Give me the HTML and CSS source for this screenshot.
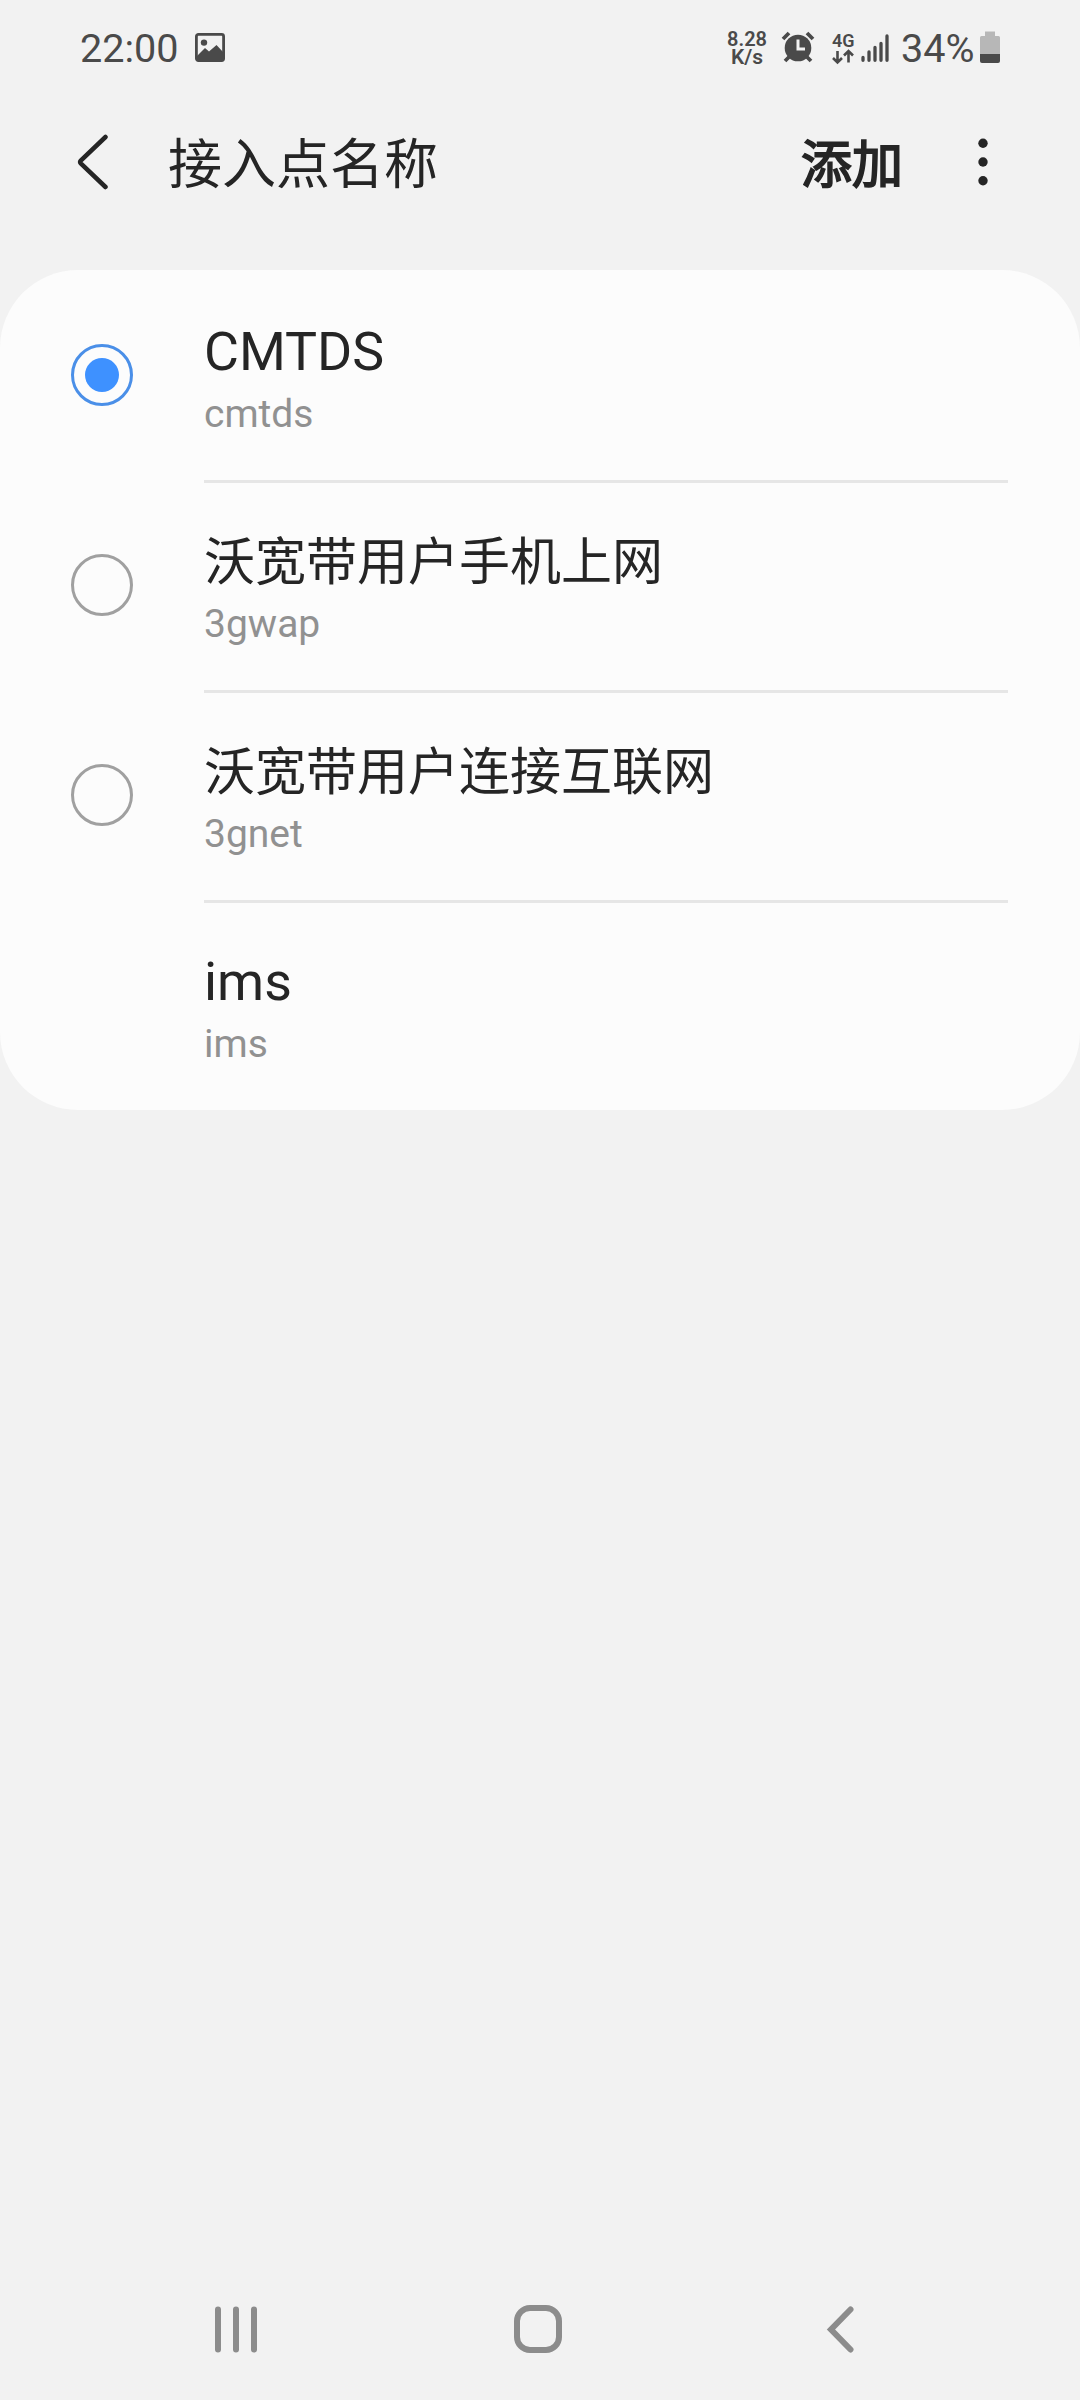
FILE: index.html
```html
<!DOCTYPE html>
<html lang="zh-CN">
<head>
<meta charset="utf-8">
<title>接入点名称</title>
<link rel="stylesheet" href="styles.css">
</head>
<body>
<div class="status">
  <div class="status-left">
    <span class="clock">22:00</span>
    <svg class="pic" width="30" height="29" viewBox="0 0 30 29"><rect x="1.4" y="1.4" width="27.2" height="26.2" rx="2" fill="none" stroke="#4a4a4a" stroke-width="2.8"/><circle cx="9" cy="9.6" r="3.2" fill="#4a4a4a"/><path fill="#4a4a4a" d="M2 23L10 15L14 18.500L21.500 12L28 19V27H2Z"/></svg>
  </div>
  <div class="status-right">
    <div class="speed"><span>8.28</span><span class="unit">K/s</span></div>
    <svg class="alarm" width="34" height="32" viewBox="0 0 34 32"><circle cx="17" cy="17" r="13.300" fill="#4a4a4a"/><path d="M2 8L8 2M32 8L26 2M8.500 25.500L4 30M25.500 25.500L30 30" stroke="#4a4a4a" stroke-width="3.800"/><path d="M17 8.500V18H24" stroke="#f2f2f2" stroke-width="3" fill="none"/></svg>
    <div class="net"><span>4G</span><svg width="22" height="16" viewBox="0 0 22 16"><path d="M5.500 2V13.500M1 9L5.500 13.500L10 9M16.500 13.500V2M12 6.500L16.500 2L21 6.500" stroke="#4a4a4a" stroke-width="2.600" fill="none"/></svg></div>
    <svg class="signal" width="28" height="28" viewBox="0 0 28 28"><path stroke="#4a4a4a" stroke-width="3.300" stroke-linecap="round" d="M2 23.500V26.300M8 18V26.300M14 13.500V26.300M20 9.500V26.300M26 2V26.300"/></svg>
    <span class="percent">34%</span>
    <svg class="battery" width="20" height="32" viewBox="0 0 20 32"><path fill="#b7b7b7" d="M5 0.500H15V5H18.500Q20 5 20 6.500V23H0V6.500Q0 5 1.500 5H5Z"/><path fill="#4a4a4a" d="M0 23H20V30Q20 32 18 32H2Q0 32 0 30Z"/></svg>
  </div>
</div>
<header class="bar">
  <svg class="back" width="32" height="58" viewBox="0 0 32 58"><path d="M28.500 4L3.800 27.500Q2.500 29 3.800 30.500L28.500 54" fill="none" stroke="#252525" stroke-width="4.500" stroke-linecap="round"/></svg>
  <h1 class="title">接入点名称</h1>
  <span class="add">添加</span>
  <svg class="more" width="10" height="48" viewBox="0 0 10 48"><g fill="#252525"><circle cx="5" cy="5.300" r="4.700"/><circle cx="5" cy="24" r="4.700"/><circle cx="5" cy="42.700" r="4.700"/></g></svg>
</header>
<main class="card">
  <div class="row"><i class="radio on"></i><div class="text"><div class="name latin">CMTDS</div><div class="apn">cmtds</div></div></div>
  <div class="row"><i class="radio"></i><div class="text ruled"><div class="name">沃宽带用户手机上网</div><div class="apn">3gwap</div></div></div>
  <div class="row"><i class="radio"></i><div class="text ruled"><div class="name">沃宽带用户连接互联网</div><div class="apn">3gnet</div></div></div>
  <div class="row"><i class="radio none"></i><div class="text ruled"><div class="name latin">ims</div><div class="apn">ims</div></div></div>
</main>
<nav class="nav">
  <svg class="recents" width="44" height="48" viewBox="0 0 44 48"><path d="M4 4.500V44.500M22 4.500V44.500M40 4.500V44.500"/></svg>
  <svg class="home" width="48" height="48" viewBox="0 0 48 48"><rect x="3" y="3" width="42" height="42" rx="13"/></svg>
  <svg class="return" width="28" height="48" viewBox="0 0 28 48"><path d="M24.500 4.500L5 24.500L24.500 44.500"/></svg>
</nav>
</body>
</html>
```
FILE: styles.css
```css
* { box-sizing: border-box; }
body { margin: 0; height: 2400px; background: #f2f2f2; color: #252525; font-family: Roboto, "Noto Sans CJK SC", sans-serif; display: flex; flex-direction: column; }
.status { height: 96px; padding: 0 80px; display: flex; justify-content: space-between; align-items: center; color: #4a4a4a; }
.status-left, .status-right { display: flex; align-items: center; }
.clock, .percent { font-size: 39.6px; line-height: 46px; padding-top: 2px; }
.pic { margin: 0 0 2px 16px; }
.speed { width: 40px; display: flex; flex-direction: column; align-items: center; font-size: 20px; line-height: 18px; font-weight: 600; }
.unit { font-size: 21px; }
.alarm { margin: 0 0 2px 14px; }
.net { width: 22px; margin-left: 17px; display: flex; flex-direction: column; font-size: 18px; line-height: 17px; font-weight: 600; }
.signal { margin-left: 7px; }
.percent { width: 74px; margin-left: 12px; }
.battery { margin: 0 0 2px 5px; }
.bar { height: 174px; padding: 0 92px 42px 77px; display: flex; align-items: center; }
.title { margin: -3px 0 0 59px; font-size: 54px; font-weight: 400; }
.add { margin: -3px 0 0 auto; font-size: 51px; -webkit-text-stroke: 1.8px #252525; }
.more { margin-left: 75px; }
.card { height: 840px; background: #fcfcfc; border-radius: 78px; }
.row { height: 210px; padding: 0 72px 0 71px; display: flex; align-items: center; }
.radio { width: 62px; height: 62px; flex: none; border: 3px solid #a0a0a0; border-radius: 50%; display: grid; place-items: center; }
.on { border-color: #4a8fe8; }
.on::after { content: ""; width: 34px; height: 34px; border-radius: 50%; background: #3e91ff; }
.none { visibility: hidden; }
.text { margin-left: 71px; flex: 1; height: 210px; padding-top: 49px; }
.ruled { border-top: 3px solid #e6e6e6; padding-top: 46px; }
.name { font-size: 51px; line-height: 67px; }
.latin { font-size: 53.7px; line-height: 65px; margin-bottom: 2px; }
.apn { font-size: 39px; line-height: 56px; color: #919191; }
.nav { margin-top: auto; height: 144px; padding: 2px 0 0 214px; display: flex; align-items: center; }
.nav svg { fill: none; stroke: #8c8c8c; stroke-width: 6; stroke-linecap: round; }
.home { margin-left: 256px; }
.return { margin-left: 264px; }
```
